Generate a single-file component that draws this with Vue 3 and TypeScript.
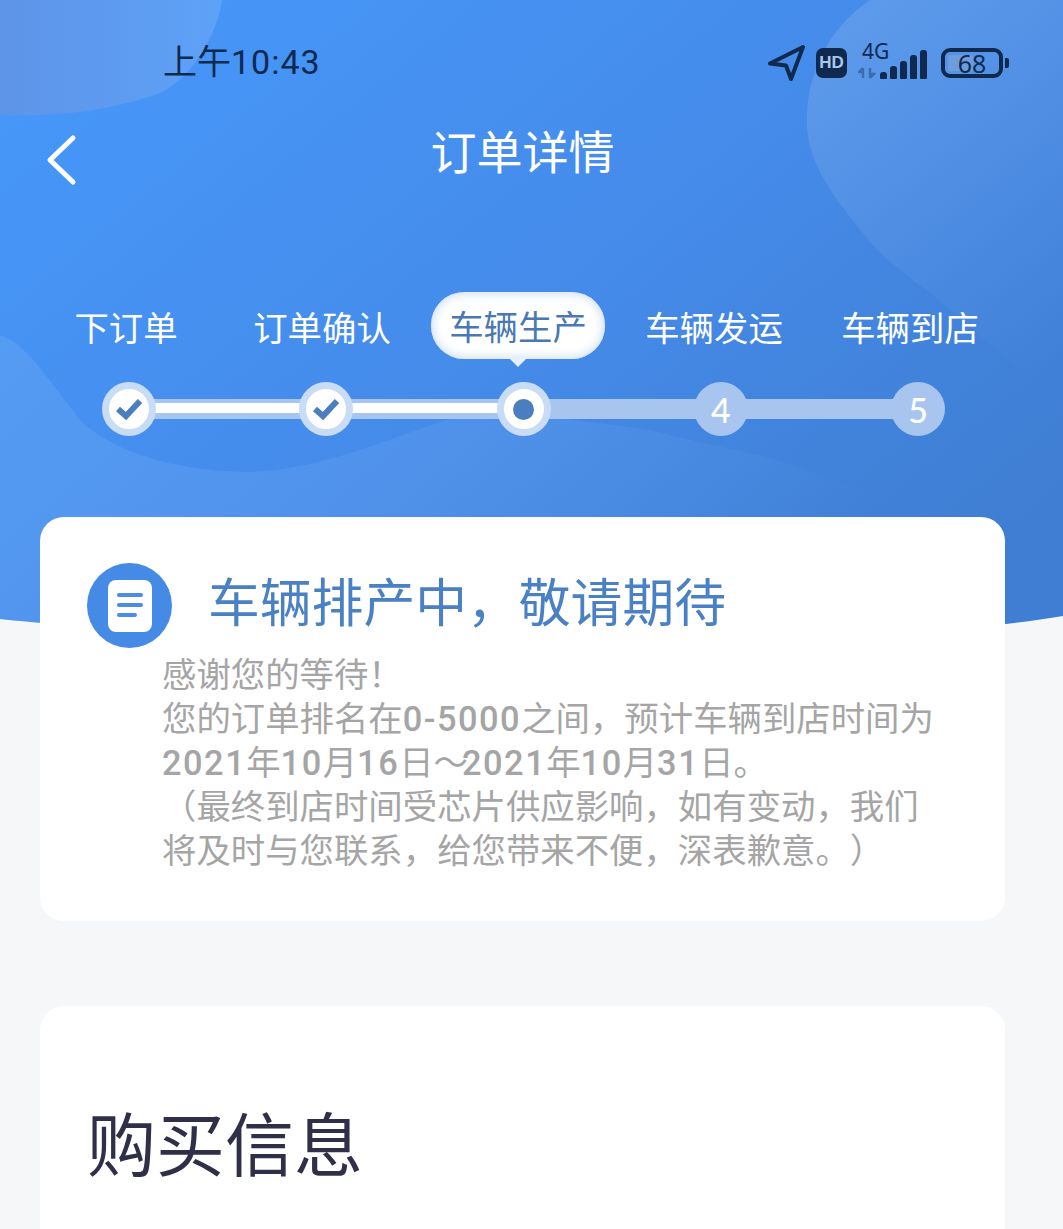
<template>
  <div class="page">
    <svg class="hero-bg" width="1063" height="660" viewBox="0 0 1063 660" xmlns="http://www.w3.org/2000/svg">
      <defs>
        <linearGradient id="heroFill" x1="0" y1="0" x2="1" y2="0.75">
          <stop offset="0" stop-color="#4699fb" />
          <stop offset="0.55" stop-color="#458bea" />
          <stop offset="1" stop-color="#3f7ed2" />
        </linearGradient>
        <linearGradient id="cornerFill" x1="0" y1="0" x2="1" y2="0">
          <stop offset="0" stop-color="#5e94e8" />
          <stop offset="1" stop-color="#5da2f7" />
        </linearGradient>
        <linearGradient id="rightFill" x1="0.2" y1="0" x2="0.7" y2="1">
          <stop offset="0" stop-color="#8ab4ea" stop-opacity="0.36" />
          <stop offset="0.6" stop-color="#8ab4ea" stop-opacity="0.12" />
          <stop offset="1" stop-color="#8ab4ea" stop-opacity="0" />
        </linearGradient>
        <linearGradient id="waveFill" x1="0" y1="0" x2="1" y2="0.35">
          <stop offset="0" stop-color="#80b4f5" stop-opacity="0.26" />
          <stop offset="0.5" stop-color="#80b4f5" stop-opacity="0.18" />
          <stop offset="0.9" stop-color="#80b4f5" stop-opacity="0" />
        </linearGradient>
        <clipPath id="heroClip">
          <path d="M0 619C200 640 800 660 1063 616V0H0Z" />
        </clipPath>
      </defs>
      <g clip-path="url(#heroClip)">
        <rect width="1063" height="660" fill="url(#heroFill)" />
        <path d="M0 115C60 118 120 108 160 93C195 76 218 30 222 0H0Z" fill="url(#cornerFill)" />
        <path d="M870 0C825 30 805 80 807 127C810 165 830 195 880 253C900 270 915 282 930 293C965 320 1015 365 1063 420V0Z" fill="url(#rightFill)" />
        <path d="M0 335C30 345 50 385 85 425C125 458 190 472 250 472C320 470 390 438 447 420C490 408 530 412 560 418C600 424 640 426 678 437C730 450 770 455 813 473C870 495 910 495 950 513C990 530 1030 560 1063 600V660H0Z" fill="url(#waveFill)" />
      </g>
    </svg>

    <div class="status-bar">
      <span class="clock">上午<span class="time">10:43</span></span>
      <div class="status-icons">
        <svg width="40" height="38" viewBox="0 0 40 38">
          <path d="M37 3L4 19.5L20 21.5L25 35Z" fill="none" stroke="#10294e" stroke-width="4" stroke-linejoin="round" />
        </svg>
        <span class="hd">HD</span>
        <div class="signal">
          <span class="net">4G</span>
          <svg class="arrows" width="18" height="12" viewBox="0 0 18 12">
            <path d="M5 1V11M5 1L1 5H5M12 1V11M12 11L16 7H12" fill="none" stroke="#3a6cae" stroke-width="2.4" />
          </svg>
          <div class="bars">
            <i v-for="h in barHeights" :key="h" class="bar" :style="{ height: h + 'px' }"></i>
          </div>
        </div>
        <div class="battery">
          <div class="battery-body">
            <i class="battery-level"></i>
            <span class="battery-num">68</span>
          </div>
          <i class="battery-cap"></i>
        </div>
      </div>
    </div>

    <div class="nav-bar">
      <svg class="back" width="34" height="54" viewBox="0 0 34 54">
        <path d="M29 5L6 27L29 49" fill="none" stroke="#fff" stroke-width="5" stroke-linecap="round" stroke-linejoin="round" />
      </svg>
      <h1 class="nav-title">订单详情</h1>
    </div>

    <div class="steps">
      <div class="labels">
        <div v-for="(step, i) in steps" :key="step" class="label" :class="{ current: i === currentStep }">
          <span>{{ step }}</span>
        </div>
      </div>
      <div class="track">
        <i class="track-done" :style="{ width: doneWidth + 'px' }"></i>
        <div v-for="(step, i) in steps" :key="step" class="node" :class="nodeClass(i)">
          <svg v-if="i < currentStep" width="28" height="24" viewBox="0 0 28 24">
            <path d="M3 12L11 19L25 4" fill="none" stroke="#4a7ebf" stroke-width="6" />
          </svg>
          <i v-else-if="i === currentStep" class="dot"></i>
          <span v-else>{{ i + 1 }}</span>
        </div>
      </div>
    </div>

    <section class="card status-card">
      <div class="status-head">
        <div class="doc-icon">
          <svg width="44" height="52" viewBox="0 0 44 52">
            <rect width="44" height="52" rx="8" fill="#fff" />
            <path d="M11 15H33M11 25H33M11 35H27" stroke="#4a8de6" stroke-width="4" stroke-linecap="round" />
          </svg>
        </div>
        <h2 class="status-title">车辆排产中，敬请期待</h2>
      </div>
      <div class="status-text">
        <p>感谢您的等待！</p>
        <p>您的订单排名在<span class="num">0-5000</span>之间，预计车辆到店时间为</p>
        <p><span class="num">2021</span>年<span class="num">10</span>月<span class="num">16</span>日<span class="tilde">～</span><span class="num">2021</span>年<span class="num">10</span>月<span class="num">31</span>日。</p>
        <p>（最终到店时间受芯片供应影响，如有变动，我们</p>
        <p>将及时与您联系，给您带来不便，深表歉意。）</p>
      </div>
    </section>

    <section class="card buy-card">
      <h2 class="buy-title">购买信息</h2>
    </section>
  </div>
</template>

<script setup lang="ts">
import { computed } from 'vue';

const steps = ['下订单', '订单确认', '车辆生产', '车辆发运', '车辆到店'];
const currentStep = 2;
const barHeights = [7, 13, 18, 24, 29];

const doneWidth = computed(() => currentStep * 197);

const nodeClass = (i: number) => {
  if (i < currentStep) return 'done';
  if (i === currentStep) return 'active';
  return 'todo';
};
</script>

<style scoped>
.page {
  position: relative;
  width: 1063px;
  height: 1229px;
  overflow: hidden;
  background: #f6f7f9;
  font-family: "Noto Sans CJK SC", "Noto Sans", sans-serif;
  text-spacing-trim: space-all;
}

.hero-bg {
  position: absolute;
  top: 0;
  left: 0;
}

.status-bar,
.nav-bar,
.steps,
.card {
  position: relative;
}

.status-bar {
  display: flex;
  justify-content: space-between;
  align-items: center;
  height: 66px;
  padding: 26px 54px 0 163px;
  color: #10294e;
}

.clock {
  font-size: 34px;
}

.time {
  font-family: "Roboto", sans-serif;
  font-weight: 400;
  letter-spacing: 1px;
}

.status-icons {
  display: flex;
  align-items: center;
  margin-top: 7px;
}

.hd {
  width: 31px;
  height: 30px;
  margin: 0 14px 0 10px;
  border-radius: 7px;
  background: #10294e;
  color: #a9c8f0;
  font: 700 17px/30px "Liberation Sans", sans-serif;
  text-align: center;
}

.signal {
  position: relative;
  width: 66px;
  height: 36px;
}

.net {
  position: absolute;
  top: -6px;
  left: 1px;
  font: 400 21px/24px "Noto Sans", sans-serif;
}

.arrows {
  position: absolute;
  left: -3px;
  bottom: 2px;
}

.bars {
  position: absolute;
  right: 0;
  bottom: 2px;
  display: flex;
  align-items: flex-end;
  gap: 3px;
}

.bar {
  width: 7px;
  border-radius: 3px 3px 1px 1px;
  background: #10294e;
}

.battery {
  display: flex;
  align-items: center;
  margin-left: 14px;
}

.battery-body {
  position: relative;
  width: 62px;
  height: 30px;
  box-sizing: border-box;
  border: 4px solid #10294e;
  border-radius: 9px;
  text-align: center;
}

.battery-level {
  position: absolute;
  left: 3px;
  top: 3px;
  bottom: 3px;
  width: 25px;
  border-radius: 2px;
  background: #6f9ddc;
}

.battery-num {
  position: relative;
  display: block;
  font: 400 25px/22px "Noto Sans", sans-serif;
}

.battery-cap {
  width: 4px;
  height: 10px;
  margin-left: 2px;
  border-radius: 0 2px 2px 0;
  background: #10294e;
}

.nav-bar {
  display: flex;
  justify-content: center;
  align-items: center;
  height: 64px;
  margin-top: 27px;
  padding-right: 18px;
}

.back {
  position: absolute;
  left: 44px;
  top: 14px;
}

.nav-title {
  margin: -4px 0 0;
  color: #fff;
  font-size: 46px;
  font-weight: 400;
  line-height: 64px;
}

.steps {
  margin-top: 109px;
}

.labels {
  display: grid;
  grid-template-columns: repeat(5, 196px);
  padding-left: 28px;
}

.label {
  display: flex;
  justify-content: center;
  color: #fff;
  font-size: 34.4px;
  line-height: 68px;
  height: 68px;
}

.label.current span {
  position: relative;
  width: 174px;
  height: 67px;
  border-radius: 33px;
  background: #fff;
  box-shadow: inset 0 0 12px #bcd3f3;
  color: #4a78b3;
  text-align: center;
  line-height: 67px;
}

.label.current span::after {
  content: "";
  position: absolute;
  left: 77px;
  bottom: -8px;
  border: 10px solid transparent;
  border-top-color: #e6effb;
  border-bottom: 0;
}

.track {
  position: relative;
  display: flex;
  justify-content: space-between;
  width: 843px;
  height: 54px;
  margin: 22px 0 0 102px;
}

.track::before {
  content: "";
  position: absolute;
  left: 27px;
  right: 27px;
  top: 17px;
  height: 20px;
  background: #a7c5ef;
}

.track-done {
  position: absolute;
  left: 27px;
  top: 21px;
  height: 10px;
  background: #fff;
}

.node {
  position: relative;
  display: flex;
  justify-content: center;
  align-items: center;
  width: 54px;
  height: 54px;
  box-sizing: border-box;
  border-radius: 50%;
}

.node.done,
.node.active {
  border: 7px solid #c8dcf6;
  background: #fff;
}

.node.todo {
  background: #a7c5ef;
  color: #fff;
  font-family: "Lato", sans-serif;
  font-size: 34px;
  font-weight: 500;
}

.dot {
  width: 21px;
  height: 21px;
  border-radius: 50%;
  background: #4a7ebf;
}

.card {
  width: 965px;
  margin-left: 40px;
  box-sizing: border-box;
  border-radius: 24px;
  background: #fff;
}

.status-card {
  height: 404px;
  margin-top: 81px;
  padding: 46px 0 0 47px;
}

.status-head {
  display: flex;
  align-items: center;
  gap: 36px;
}

.doc-icon {
  display: flex;
  justify-content: center;
  align-items: center;
  width: 85px;
  height: 85px;
  border-radius: 50%;
  background: #458be6;
}

.status-title {
  margin: -12px 0 0;
  color: #4a80c4;
  font-size: 51.8px;
  font-weight: 400;
  line-height: 72px;
}

.status-text {
  margin: 2px 0 0 75px;
  color: #a5a5a5;
  font-size: 34.4px;
  line-height: 44px;
}

.status-text p {
  height: 44px;
  margin: 0;
  white-space: nowrap;
}

.num {
  font-family: "Roboto", sans-serif;
  font-weight: 500;
  letter-spacing: 1.5px;
  line-height: 1;
}

.tilde {
  letter-spacing: -6px;
}

.buy-card {
  height: 300px;
  margin-top: 85px;
  padding: 89px 0 0 47px;
}

.buy-title {
  margin: 0;
  color: #2f3048;
  font-size: 69px;
  font-weight: 400;
  line-height: 92px;
}
</style>
